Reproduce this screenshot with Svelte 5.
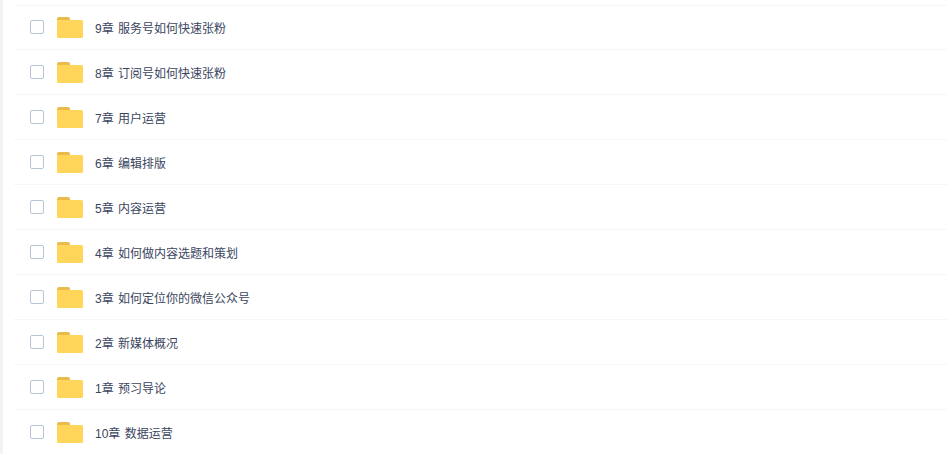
<script lang="ts">
const folders = [
	"9章 服务号如何快速张粉",
	"8章 订阅号如何快速张粉",
	"7章 用户运营",
	"6章 编辑排版",
	"5章 内容运营",
	"4章 如何做内容选题和策划",
	"3章 如何定位你的微信公众号",
	"2章 新媒体概况",
	"1章 预习导论",
	"10章 数据运营",
];
</script>

<div class="page">
	<ul class="file-list">
		{#each folders as name}
			<li class="file-row">
				<span class="check"></span>
				<svg class="folder" viewBox="0 0 26 21" width="26" height="21" aria-hidden="true">
					<path d="M0 2a2 2 0 0 1 2-2h9a2 2 0 0 1 2 2v2H0z" fill="#e9bb4c" />
					<path d="M0 3h24.500a1.500 1.500 0 0 1 1.500 1.500v15a1.500 1.500 0 0 1-1.500 1.500H1.500A1.500 1.500 0 0 1 0 19.500z" fill="#ffd659" />
				</svg>
				<span class="name">{name}</span>
			</li>
		{/each}
	</ul>
</div>

<style>
	:global(body) {
		margin: 0;
		background: #fff;
		overflow: hidden;
	}

	.page {
		height: 454px;
		overflow: hidden;
		border-left: 3px solid #f3f3f4;
		padding: 5px 0 0 11px;
		box-sizing: border-box;
		font-family: "Liberation Sans", "Noto Sans CJK SC", sans-serif;
	}

	.file-list {
		margin: 0;
		padding: 0;
		list-style: none;
	}

	.file-row {
		display: flex;
		align-items: center;
		box-sizing: border-box;
		height: 45px;
		border-top: 1px solid #f4f6f9;
		padding-left: 16px;
	}

	.file-row:first-child {
		height: 44px;
		padding-bottom: 1px;
	}

	.check {
		width: 12px;
		height: 12px;
		border: 1px solid #b8c5d6;
		border-radius: 2px;
		margin-right: 13px;
		flex-shrink: 0;
	}

	.folder {
		flex-shrink: 0;
		margin-right: 12px;
	}

	.name {
		font-size: 12px;
		color: #3a4560;
		word-spacing: 1px;
	}
</style>
